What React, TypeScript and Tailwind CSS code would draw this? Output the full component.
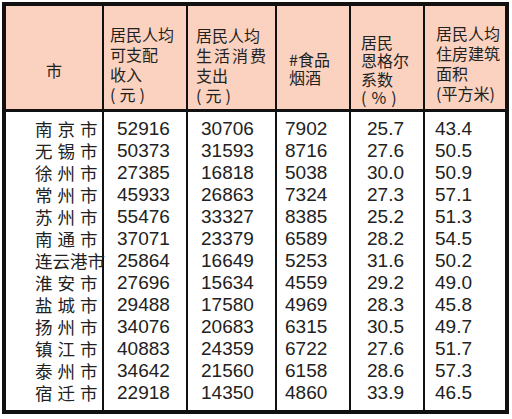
import React from "react";

const rows = [
  ["南京市", "52916", "30706", "7902", "25.7", "43.4"],
  ["无锡市", "50373", "31593", "8716", "27.6", "50.5"],
  ["徐州市", "27385", "16818", "5038", "30.0", "50.9"],
  ["常州市", "45933", "26863", "7324", "27.3", "57.1"],
  ["苏州市", "55476", "33327", "8385", "25.2", "51.3"],
  ["南通市", "37071", "23379", "6589", "28.2", "54.5"],
  ["连云港市", "25864", "16649", "5253", "31.6", "50.2"],
  ["淮安市", "27696", "15634", "4559", "29.2", "49.0"],
  ["盐城市", "29488", "17580", "4969", "28.3", "45.8"],
  ["扬州市", "34076", "20683", "6315", "30.5", "49.7"],
  ["镇江市", "40883", "24359", "6722", "27.6", "51.7"],
  ["泰州市", "34642", "21560", "6158", "28.6", "57.3"],
  ["宿迁市", "22918", "14350", "4860", "33.9", "46.5"],
];

const cjk = "[font-family:'Noto_Sans_CJK_SC',sans-serif]";
const numCols = [
  { i: 1, cls: "pl-[13px] border-r-2 border-[#111]" },
  { i: 2, cls: "pl-[13px] border-r-2 border-[#111]" },
  { i: 3, cls: "pl-[8px] border-r-2 border-[#111]" },
  { i: 4, cls: "pl-[16px] border-r-2 border-[#111]" },
  { i: 5, cls: "pl-[10px]" },
];

export default function App(): React.JSX.Element {
  return (
    <div className="w-[512px] h-[419px] bg-white pt-[2px] pl-[2px]">
      <div className="w-[507px] h-[412px] border-4 border-[#111] flex flex-col text-[#222]">
        {/* header */}
        <div className={`h-[106px] bg-[#fbd2bf] border-b-[3px] border-[#111] grid grid-cols-[98px_84px_89px_74px_74px_78px] text-[16px] ${cjk}`}>
          <div className="border-r-2 border-[#111] pt-[54px] text-center leading-[20px]">市</div>
          <div className="border-r-2 border-[#111] pt-[18px] pl-[6px] leading-[20px]">
            <div>居民人均</div>
            <div>可支配</div>
            <div>收入</div>
            <div className="tracking-[4px]">(元)</div>
          </div>
          <div className="border-r-2 border-[#111] pt-[19px] pl-[8px] leading-[20px]">
            <div>居民人均</div>
            <div className="tracking-[2px]">生活消费</div>
            <div>支出</div>
            <div className="tracking-[4px]">(元)</div>
          </div>
          <div className="border-r-2 border-[#111] pt-[44px] pl-[12px] leading-[18px]">
            <div>#食品</div>
            <div>烟酒</div>
          </div>
          <div className="border-r-2 border-[#111] pt-[27px] pl-[10px] leading-[18.3px]">
            <div>居民</div>
            <div>恩格尔</div>
            <div>系数</div>
            <div className="tracking-[5px]">(%)</div>
          </div>
          <div className="pt-[17px] pl-[11px] leading-[20px]">
            <div>居民人均</div>
            <div>住房建筑</div>
            <div>面积</div>
            <div>(平方米)</div>
          </div>
        </div>

        {/* body */}
        <div className="flex-1 grid grid-cols-[98px_84px_89px_74px_74px_78px] leading-[22px]">
          <div className={`border-r-2 border-[#111] pt-[6px] pl-[29px] text-[17.5px] ${cjk}`}>
            {rows.map((r) => (
              <div key={r[0]} className={r[0].length === 3 ? "tracking-[5px] whitespace-nowrap" : "whitespace-nowrap"}>
                {r[0]}
              </div>
            ))}
          </div>
          {numCols.map((c) => (
            <div key={c.i} className={`pt-[6px] text-[19px] font-['Liberation_Sans',Arial,sans-serif] ${c.cls}`}>
              {rows.map((r, j) => (
                <div key={j}>{r[c.i]}</div>
              ))}
            </div>
          ))}
        </div>
      </div>
    </div>
  );
}
